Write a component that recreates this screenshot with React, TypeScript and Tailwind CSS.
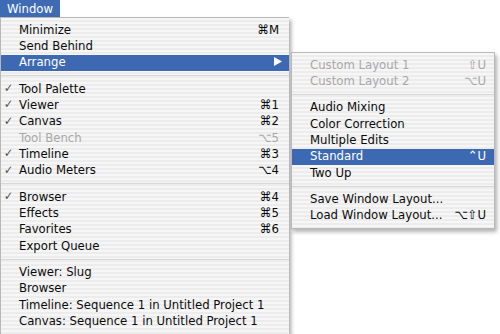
type Row =
  | { sep: true }
  | {
      sep?: false;
      label: string;
      check?: boolean;
      keys?: string;
      disabled?: boolean;
      active?: boolean;
      arrow?: boolean;
    };

const mainItems: Row[] = [
  { label: "Minimize", keys: "⌘M" },
  { label: "Send Behind" },
  { label: "Arrange", active: true, arrow: true },
  { sep: true },
  { label: "Tool Palette", check: true },
  { label: "Viewer", check: true, keys: "⌘1" },
  { label: "Canvas", check: true, keys: "⌘2" },
  { label: "Tool Bench", disabled: true, keys: "⌥5" },
  { label: "Timeline", check: true, keys: "⌘3" },
  { label: "Audio Meters", check: true, keys: "⌥4" },
  { sep: true },
  { label: "Browser", check: true, keys: "⌘4" },
  { label: "Effects", keys: "⌘5" },
  { label: "Favorites", keys: "⌘6" },
  { label: "Export Queue" },
  { sep: true },
  { label: "Viewer: Slug" },
  { label: "Browser" },
  { label: "Timeline: Sequence 1 in Untitled Project 1" },
  { label: "Canvas: Sequence 1 in Untitled Project 1" },
];

const subItems: Row[] = [
  { label: "Custom Layout 1", disabled: true, keys: "⇧U" },
  { label: "Custom Layout 2", disabled: true, keys: "⌥U" },
  { sep: true },
  { label: "Audio Mixing" },
  { label: "Color Correction" },
  { label: "Multiple Edits" },
  { label: "Standard", active: true, keys: "⌃U" },
  { label: "Two Up" },
  { sep: true },
  { label: "Save Window Layout..." },
  { label: "Load Window Layout...", keys: "⌥⇧U" },
];

const stripes =
  "bg-[repeating-linear-gradient(to_bottom,#f6f6f6_0px,#f6f6f6_2px,#ececec_2px,#ececec_4px)]";

function MenuRows({ items, right }: { items: Row[]; right: string }) {
  return (
    <>
      {items.map((it, i) => {
        if (it.sep) {
          return (
            <div key={i} className="h-[10px] flex items-center">
              <div className="h-px w-full bg-[#d9d6d6]" />
            </div>
          );
        }
        const color = it.active
          ? "bg-[#3d69b3] text-white"
          : it.disabled
          ? "text-[#a8a8a8]"
          : "text-[#0a0a0a]";
        return (
          <div key={i} className={`flex items-center h-[16.33px] pb-[2px] ${right} ${color}`}>
            <span className="w-[18px] pl-[3px] text-[12px] text-[#4a4a4a] leading-none">
              {it.check ? "✓" : ""}
            </span>
            <span className="flex-1 whitespace-nowrap">{it.label}</span>
            {it.keys && <span className="whitespace-nowrap">{it.keys}</span>}
            {it.arrow && (
              <svg width="8" height="9" viewBox="0 0 8 9" className="mr-[-3px]">
                <path d="M0 0 L8 4.5 L0 9 Z" fill="white" />
              </svg>
            )}
          </div>
        );
      })}
    </>
  );
}

export default function App() {
  return (
    <div
      className="w-[500px] h-[334px] bg-white overflow-hidden text-[13px] leading-none"
      style={{ fontFamily: '"DejaVu Sans Condensed", "Liberation Sans", sans-serif' }}
    >
      <div className="w-[60px] h-[17px] bg-[#3e6bb4] text-white flex items-center pl-[7px] pb-[1px]">
        Window
      </div>
      <div className="relative">
        <div
          className={`w-[289px] border-l border-t border-[#b8b8b8] py-[4px] shadow-[2px_3px_4px_rgba(0,0,0,0.35)] ${stripes}`}
        >
          <MenuRows items={mainItems} right="pr-[10px]" />
        </div>
        <div
          className={`absolute left-[291px] top-[35px] w-[204px] border border-[#b8b8b8] py-[4px] shadow-[2px_3px_4px_rgba(0,0,0,0.3)] ${stripes}`}
        >
          <MenuRows items={subItems} right="pr-[8px]" />
        </div>
      </div>
    </div>
  );
}
